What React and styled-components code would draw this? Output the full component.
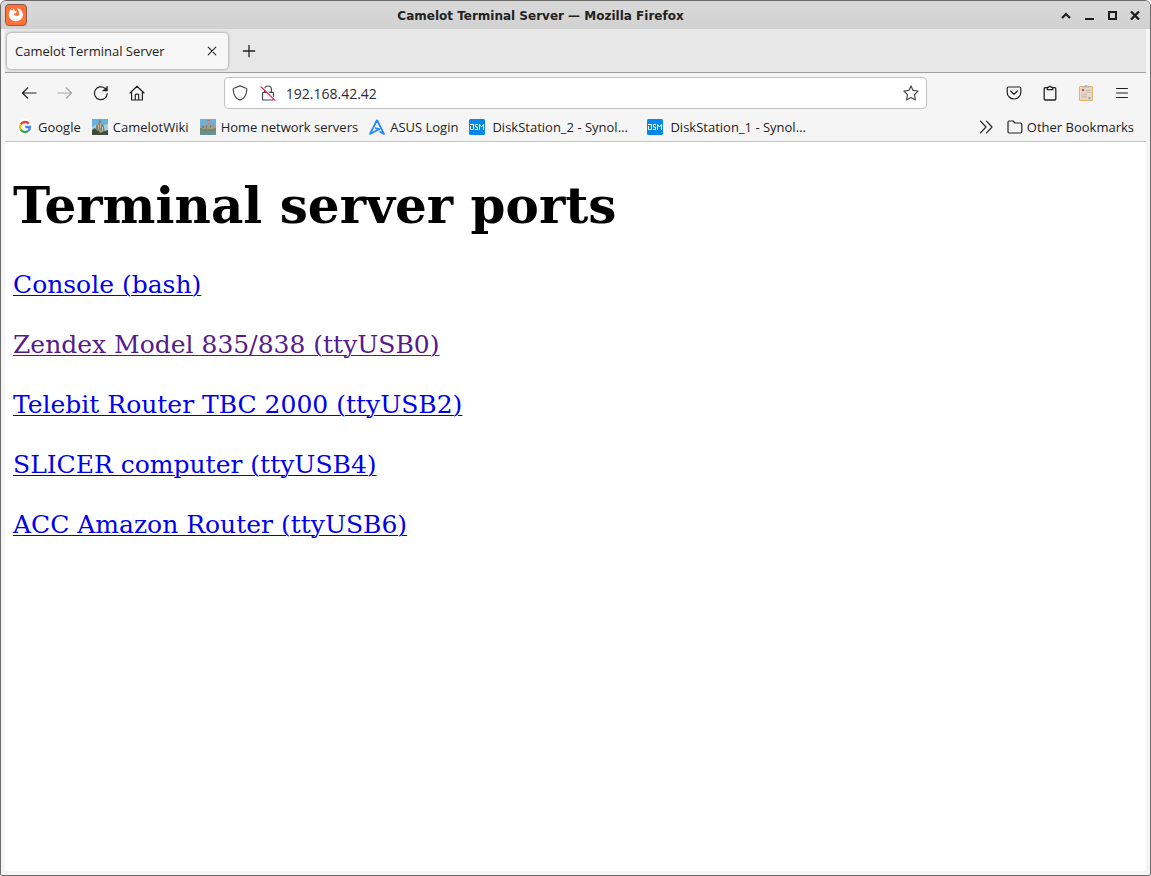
import React from 'react';
import styled, { createGlobalStyle } from 'styled-components';

const Global = createGlobalStyle`
  *, *::before, *::after { box-sizing: border-box; }
  html { background: #fff; }
  body { margin: 0; font-family: "Open Sans", "Noto Sans", sans-serif; font-size: 13px; color: #222; }
`;

const Window = styled.div`
  min-height: 100vh;
  display: flex;
  flex-direction: column;
  border: 1px solid #6c6c6c;
  border-radius: 6px 6px 2px 2px;
  background: #f5f5f5;
  overflow: hidden;
`;

const TitleBar = styled.header`
  display: flex;
  align-items: center;
  height: 28px;
  padding: 0 4px;
  background: linear-gradient(#d9d9d9, #d1d1d1);
`;

const WindowTitle = styled.div`
  flex: 1;
  padding-top: 1px;
  text-align: center;
  font: bold 12px/16px "DejaVu Sans", sans-serif;
  color: #222;
`;

const WindowControls = styled.div`
  display: flex;
  justify-content: flex-end;
`;

const PlainButton = styled.button`
  display: flex;
  align-items: center;
  justify-content: center;
  padding: 0;
  border: 0;
  background: none;
  color: inherit;
  font: inherit;
`;

const ControlButton = styled(PlainButton)`
  width: 23px;
  height: 24px;
  color: #1c1c1c;
`;

const Chrome = styled.div`
  flex: 1;
  display: flex;
  flex-direction: column;
  padding: 0 4px 4px;
`;

const TabStrip = styled.div`
  display: flex;
  align-items: center;
  height: 44px;
  padding: 0 2px;
  background: #e7e7e7;
  border-bottom: 1px solid #9e9e9e;
`;

const Tab = styled.div`
  display: flex;
  align-items: center;
  justify-content: space-between;
  width: 221px;
  height: 36px;
  padding: 0 8px;
  border-radius: 4px;
  background: #f6f6f6;
  box-shadow: 0 0 3px rgba(0, 0, 0, 0.45);
`;

const TabClose = styled(PlainButton)`
  width: 16px;
  height: 16px;
`;

const NewTab = styled(PlainButton)`
  width: 36px;
  height: 36px;
  margin-left: 3px;
`;

const NavBar = styled.nav`
  display: flex;
  align-items: center;
  height: 40px;
  padding: 0 6px;
`;

const NavButton = styled(PlainButton)`
  width: 36px;
  height: 32px;
  color: ${(p) => (p.disabled ? '#a5a5a5' : '#222')};
`;

const Spring = styled.span`
  flex: 1 1 0;
`;

const UrlBar = styled.form`
  flex: 10 1 0;
  display: flex;
  align-items: center;
  height: 32px;
  padding: 0 7px;
  gap: 12px;
  border: 1px solid #c2c2c2;
  border-radius: 4px;
  background: #fff;
  color: #4a4a4a;
`;

const UrlInput = styled.input`
  flex: 1;
  min-width: 0;
  margin-left: -2px;
  padding: 0;
  border: 0;
  outline: 0;
  background: none;
  font: inherit;
  font-size: 14px;
  color: #2b2a33;
`;

const BookmarksBar = styled.div`
  display: flex;
  align-items: center;
  height: 29px;
  padding: 0 12px;
  border-bottom: 1px solid #c4c4c4;
`;

const BookmarkList = styled.div`
  flex: 1;
  display: flex;
  gap: 11px;
`;

const Bookmark = styled.a`
  display: flex;
  align-items: center;
  gap: ${(p) => (p.$wide ? 7 : 5)}px;
  min-width: ${(p) => (p.$wide ? '167px' : '0')};
  white-space: nowrap;
  color: #222;
  text-decoration: none;
`;

const Overflow = styled(PlainButton)`
  width: 16px;
  height: 24px;
  margin-right: 13px;
`;

const OtherBookmarks = styled(PlainButton)`
  gap: 4px;
  color: #222;
`;

const Page = styled.main`
  flex: 1;
  padding: 0 8px;
  background: #fff;
  font-family: "DejaVu Serif", serif;
  color: #000;
`;

const Heading = styled.h1`
  margin: 35px 0;
  font-size: 50px;
  line-height: 58px;
`;

const PortLine = styled.p`
  margin: 0 0 30px;
  font-size: 25px;
  line-height: 30px;
`;

const PortLink = styled.a`
  color: ${(p) => (p.$seen ? '#551a8b' : '#0000ee')};
  text-underline-offset: 2px;
  text-decoration-thickness: 1px;
`;

const Icon = ({ size = 16, width = 1.2, children }) => (
  <svg width={size} height={size} viewBox="0 0 16 16" fill="none" stroke="currentColor"
    strokeWidth={width} strokeLinecap="round" strokeLinejoin="round" aria-hidden="true">
    {children}
  </svg>
);

const FirefoxLogo = () => (
  <svg width="22" height="22" viewBox="0 0 22 22" aria-hidden="true">
    <rect x="0.5" y="0.5" width="21" height="21" rx="3.5" fill="#ff7139" stroke="#8d5946" />
    <path d="M5.7 5 7.1 6.7 8.7 4.3 9.5 6.8 12 7.6 10.7 9.2 8.8 9.7C9.3 12.2 13.3 13 14.2 10.2 14.8 7.8 12.8 6 12 4 15.8 4.8 18 7.8 18 11.2A7.2 7.2 0 0 1 3.8 11.4C3.7 9 4.6 7 5.7 5Z" fill="#fff" />
  </svg>
);

const GoogleIcon = () => (
  <svg width="16" height="16" viewBox="0 0 16 16" fill="none" strokeWidth="2.4" aria-hidden="true">
    <circle cx="8" cy="8" r="8" fill="#fff" />
    <path d="M11.8 4.6A5 5 0 0 0 3.7 5.5" stroke="#ea4335" />
    <path d="M3.7 5.5A5 5 0 0 0 3.7 10.5" stroke="#fbbc05" />
    <path d="M3.7 10.5A5 5 0 0 0 11.2 11.8" stroke="#34a853" />
    <path d="M11.2 11.8A5 5 0 0 0 13 8H8.2" stroke="#4285f4" />
  </svg>
);

const CastleIcon = () => (
  <svg width="16" height="16" viewBox="0 0 16 16" aria-hidden="true">
    <rect width="16" height="16" fill="#62b3e0" />
    <path d="M0 8 5 5 11 6 16 5V13H0Z" fill="#a5cfdf" />
    <path d="M4 13V7L5 5 6 6 7 2 8 0 9 3 10 6 11 5 12 8 13 14H4Z" fill="#857f70" />
    <path d="M6 6H7V10H6ZM8 4H9V9H8ZM10 8H11V12H10Z" fill="#c5bfa6" />
    <path d="M0 11 3 9 5 12 8 11 10 13 16 11V16H0Z" fill="#3d4c3a" />
    <path d="M6 11 9 10 11 13 8 14Z" fill="#999681" />
  </svg>
);

const FortIcon = () => (
  <svg width="16" height="16" viewBox="0 0 16 16" aria-hidden="true">
    <rect width="16" height="16" fill="#6eb0d6" />
    <path d="M1 6H3V5H5V6H7V3H10V6H12V4H14V6H15V11H1Z" fill="#a19b89" />
    <path d="M2 7H4V9H2ZM6 6H7V10H6ZM10 6H11V9H10Z" fill="#7c8079" />
    <path d="M0 9 3 10H13L16 9V12H0Z" fill="#71895d" />
    <path d="M0 12H16V16H0Z" fill="#649196" />
    <path d="M7 1H10V2H7Z" fill="#cf6670" />
  </svg>
);

const AsusIcon = () => (
  <svg width="16" height="16" viewBox="0 0 16 16" fill="none" stroke="#2488ff" strokeWidth="1.7"
    strokeLinejoin="round" aria-hidden="true">
    <path d="M8 1 1 15 10.5 10 6 9.2M8 1 15 15 10.5 12.4" />
  </svg>
);

const DsmIcon = () => (
  <svg width="16" height="16" viewBox="0 0 16 16" fill="none" stroke="#fff" strokeWidth="1" aria-hidden="true">
    <rect width="16" height="16" rx="1.5" fill="#0686e8" stroke="none" />
    <path d="M1 5.5H4.5V10.5H1.5V7M9 5.5H6.5V8H8.5V10.5H6M10.5 11V5.5L12.5 8 14.5 5.5V11" />
  </svg>
);

const ClipNoteIcon = () => (
  <svg width="16" height="18" viewBox="0 0 16 18" aria-hidden="true">
    <rect x="1.5" y="2.5" width="13" height="14" rx="0.5" fill="#e8dacb" stroke="#ddb26c" />
    <path d="M4 3.5 6 2Q8 0 10 2L12 3.5Z" fill="#b5b8ba" />
    <path d="M8 5H13V9H8ZM3 9H9V15H3Z" fill="#e3cdc3" />
    <path d="M4 10.5H9M4 12.5H9M8 6.5H13M8 8.5H13" stroke="#c9b5a8" strokeWidth="0.6" />
    <circle cx="5" cy="6" r="1.3" fill="#cd5548" />
    <circle cx="11.5" cy="14" r="1.2" fill="#65b0bd" />
  </svg>
);

const bookmarks = [
  { label: 'Google', icon: <GoogleIcon /> },
  { label: 'CamelotWiki', icon: <CastleIcon /> },
  { label: 'Home network servers', icon: <FortIcon /> },
  { label: 'ASUS Login', icon: <AsusIcon /> },
  { label: 'DiskStation_2 - Synol…', icon: <DsmIcon />, wide: true },
  { label: 'DiskStation_1 - Synol…', icon: <DsmIcon />, wide: true },
];

const ports = [
  { label: 'Console (bash)' },
  { label: 'Zendex Model 835/838 (ttyUSB0)', seen: true },
  { label: 'Telebit Router TBC 2000 (ttyUSB2)' },
  { label: 'SLICER computer (ttyUSB4)' },
  { label: 'ACC Amazon Router (ttyUSB6)' },
];

export default function App() {
  return (
    <>
      <Global />
      <Window>
        <TitleBar>
          <FirefoxLogo />
          <WindowTitle>Camelot Terminal Server — Mozilla Firefox</WindowTitle>
          <WindowControls>
            <ControlButton aria-label="Shade">
              <svg width="10" height="10" viewBox="0 0 10 10" fill="none" stroke="currentColor" strokeWidth="2.2"><path d="M1 8 5 4 9 8" /></svg>
            </ControlButton>
            <ControlButton aria-label="Minimize">
              <svg width="10" height="10" viewBox="0 0 10 10" fill="none" stroke="currentColor" strokeWidth="2"><path d="M1 9H10" /></svg>
            </ControlButton>
            <ControlButton aria-label="Maximize">
              <svg width="10" height="10" viewBox="0 0 10 10" fill="none" stroke="currentColor" strokeWidth="2"><path d="M2 2H9V9H2Z" /></svg>
            </ControlButton>
            <ControlButton aria-label="Close window">
              <svg width="10" height="10" viewBox="0 0 10 10" fill="none" stroke="currentColor" strokeWidth="2.4"><path d="M1 1.5 9 9.5M9 1.5 1 9.5" /></svg>
            </ControlButton>
          </WindowControls>
        </TitleBar>
        <Chrome>
          <TabStrip>
            <Tab>
              <span>Camelot Terminal Server</span>
              <TabClose aria-label="Close tab"><Icon width={1.1}><path d="M4.2 4.2 11.8 11.8M11.8 4.2 4.2 11.8" /></Icon></TabClose>
            </Tab>
            <NewTab aria-label="New tab"><Icon width={1.3}><path d="M8 2.3V13.7M2.3 8H13.7" /></Icon></NewTab>
          </TabStrip>
          <NavBar>
            <NavButton aria-label="Back"><Icon><path d="M15 8H1.5M6.8 2.8 1.5 8 6.8 13.2" /></Icon></NavButton>
            <NavButton aria-label="Forward" disabled><Icon><path d="M1 8H14.5M9.2 2.8 14.5 8 9.2 13.2" /></Icon></NavButton>
            <NavButton aria-label="Reload">
              <Icon><path d="M14.2 8.5A6.4 6.4 0 1 1 12 3.4" /><path d="M14.4 1.4V6H9.8Z" fill="currentColor" strokeWidth="0.6" /></Icon>
            </NavButton>
            <NavButton aria-label="Home">
              <Icon><path d="M1 8 8 1.2 15 8M2.6 6.8V15H13.4V6.8M6.3 15V10.2Q6.3 9.2 7.3 9.2H8.7Q9.7 9.2 9.7 10.2V15" /></Icon>
            </NavButton>
            <Spring />
            <UrlBar>
              <Icon><path d="M8 .9 14.1 3.3Q14.8 3.6 14.8 4.4C14.8 9.3 12.2 14 8 15.2 3.8 14 1.2 9.3 1.2 4.4Q1.2 3.6 1.9 3.3Z" /></Icon>
              <Icon>
                <path d="M2.5 8.2Q2.5 7.3 3.4 7.3H12.6Q13.5 7.3 13.5 8.2V14Q13.5 15 12.5 15H3.5Q2.5 15 2.5 14ZM4.6 7V4.4A3.4 3.4 0 0 1 11.4 4.4V7" />
                <path d="M2 1.4 15.5 14.8" stroke="#fff" strokeWidth="1.4" /><path d="M1 1.8 15 15.4" stroke="#e22850" />
              </Icon>
              <UrlInput aria-label="Address" defaultValue="192.168.42.42" />
              <Icon><path d="M8 .9 10.1 5.4 15.1 6 11.5 9.6 12.4 14.9 8 12.4 3.6 14.9 4.5 9.6 .9 6 5.9 5.4Z" /></Icon>
            </UrlBar>
            <Spring />
            <NavButton aria-label="Save to Pocket"><Icon><path d="M2.4 2H13.6Q14.8 2 14.8 3.2V7.2A6.8 6.8 0 0 1 1.2 7.2V3.2Q1.2 2 2.4 2ZM4.6 6 8 9.3 11.4 6" /></Icon></NavButton>
            <NavButton aria-label="Clipboard"><Icon width={1.3}><path d="M5 2.7H3.2Q2.2 2.7 2.2 3.7V14Q2.2 15 3.2 15H12.8Q13.8 15 13.8 14V3.7Q13.8 2.7 12.8 2.7H11M5.3 2.4H6.6Q8 0 9.4 2.4H10.7V4.7H5.3Z" /></Icon></NavButton>
            <NavButton aria-label="Clipboard notes"><ClipNoteIcon /></NavButton>
            <NavButton aria-label="Open application menu"><Icon width={1.2}><path d="M2.5 3.5H13.5M2.5 8H13.5M2.5 12.5H13.5" /></Icon></NavButton>
          </NavBar>
          <BookmarksBar>
            <BookmarkList>
              {bookmarks.map((b) => (
                <Bookmark key={b.label} href="#" $wide={b.wide}>{b.icon}<span>{b.label}</span></Bookmark>
              ))}
            </BookmarkList>
            <Overflow aria-label="Show more bookmarks"><Icon width={1.2}><path d="M2.5 2.2 8 8 2.5 13.8M8.5 2.2 14 8 8.5 13.8" /></Icon></Overflow>
            <OtherBookmarks>
              <Icon width={1.2}><path d="M2 2H6L8 4H13.5Q14.8 4 14.8 5.2V12.8Q14.8 14 13.6 14H2.2Q1 14 1 12.8V3.2Q1 2 2.2 2Z" /></Icon>
              <span>Other Bookmarks</span>
            </OtherBookmarks>
          </BookmarksBar>
          <Page>
            <Heading>Terminal server ports</Heading>
            {ports.map((p) => (
              <PortLine key={p.label}><PortLink href="#" $seen={p.seen}>{p.label}</PortLink></PortLine>
            ))}
          </Page>
        </Chrome>
      </Window>
    </>
  );
}
